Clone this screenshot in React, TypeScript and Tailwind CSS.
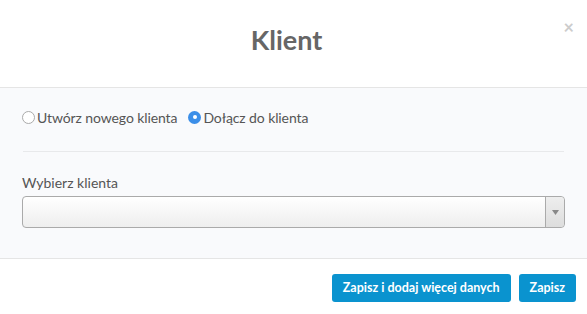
export default function App() {
  return (
    <div className="w-[587px] h-[314px] bg-white flex flex-col" style={{ fontFamily: 'Lato, sans-serif' }}>
      <div className="h-[88px] border-b border-[#e5e5e5] relative flex items-center justify-center">
        <h1 className="text-[27px] font-bold text-[#666] leading-none mb-[8px] mr-[14px]">Klient</h1>
        <span className="absolute right-[13px] top-[18px] text-[#ccc] text-[18px] font-bold leading-none">×</span>
      </div>
      <div className="h-[171px] bg-[#f9fafc] border-b border-[#e5e5e5] px-[22px] pt-[19px]">
        <div className="flex items-center h-[20px] text-[14px] text-[#555] tracking-[-0.1px]">
          <label className="flex items-center">
            <span className="w-[13px] h-[13px] rounded-full border border-[#aaa] bg-white mr-[2px]" />
            Utwórz nowego klienta
          </label>
          <label className="flex items-center ml-[11px]">
            <span className="w-[13px] h-[13px] rounded-full bg-[#3b8ee8] flex items-center justify-center mr-[2px]">
              <span className="w-[4px] h-[4px] rounded-full bg-white" />
            </span>
            Dołącz do klienta
          </label>
        </div>
        <div className="mt-[24px] h-px bg-[#e8e9eb] mx-px" />
        <div className="mt-[22px] text-[14px] text-[#555] leading-[18px]">Wybierz klienta</div>
        <div className="mt-[4px] h-[32px] rounded-[4px] border border-[#aaa] bg-gradient-to-b from-white to-[#eee] flex">
          <div className="flex-1" />
          <div className="w-[19px] border-l border-[#aaa] flex items-center justify-center bg-gradient-to-b from-[#eee] to-[#ddd] rounded-r-[4px]">
            <svg width="7" height="5" viewBox="0 0 7 5"><path d="M0 0h7L3.5 5z" fill="#888" /></svg>
          </div>
        </div>
      </div>
      <div className="flex-1 flex items-start justify-end pt-[15px] pr-[11px] gap-[8px]">
        <button className="h-[28px] px-[11px] rounded-[3px] bg-[#0a93cf] text-white text-[12.5px] font-bold">Zapisz i dodaj więcej danych</button>
        <button className="h-[28px] px-[11px] rounded-[3px] bg-[#0a93cf] text-white text-[12.5px] font-bold">Zapisz</button>
      </div>
    </div>
  );
}
